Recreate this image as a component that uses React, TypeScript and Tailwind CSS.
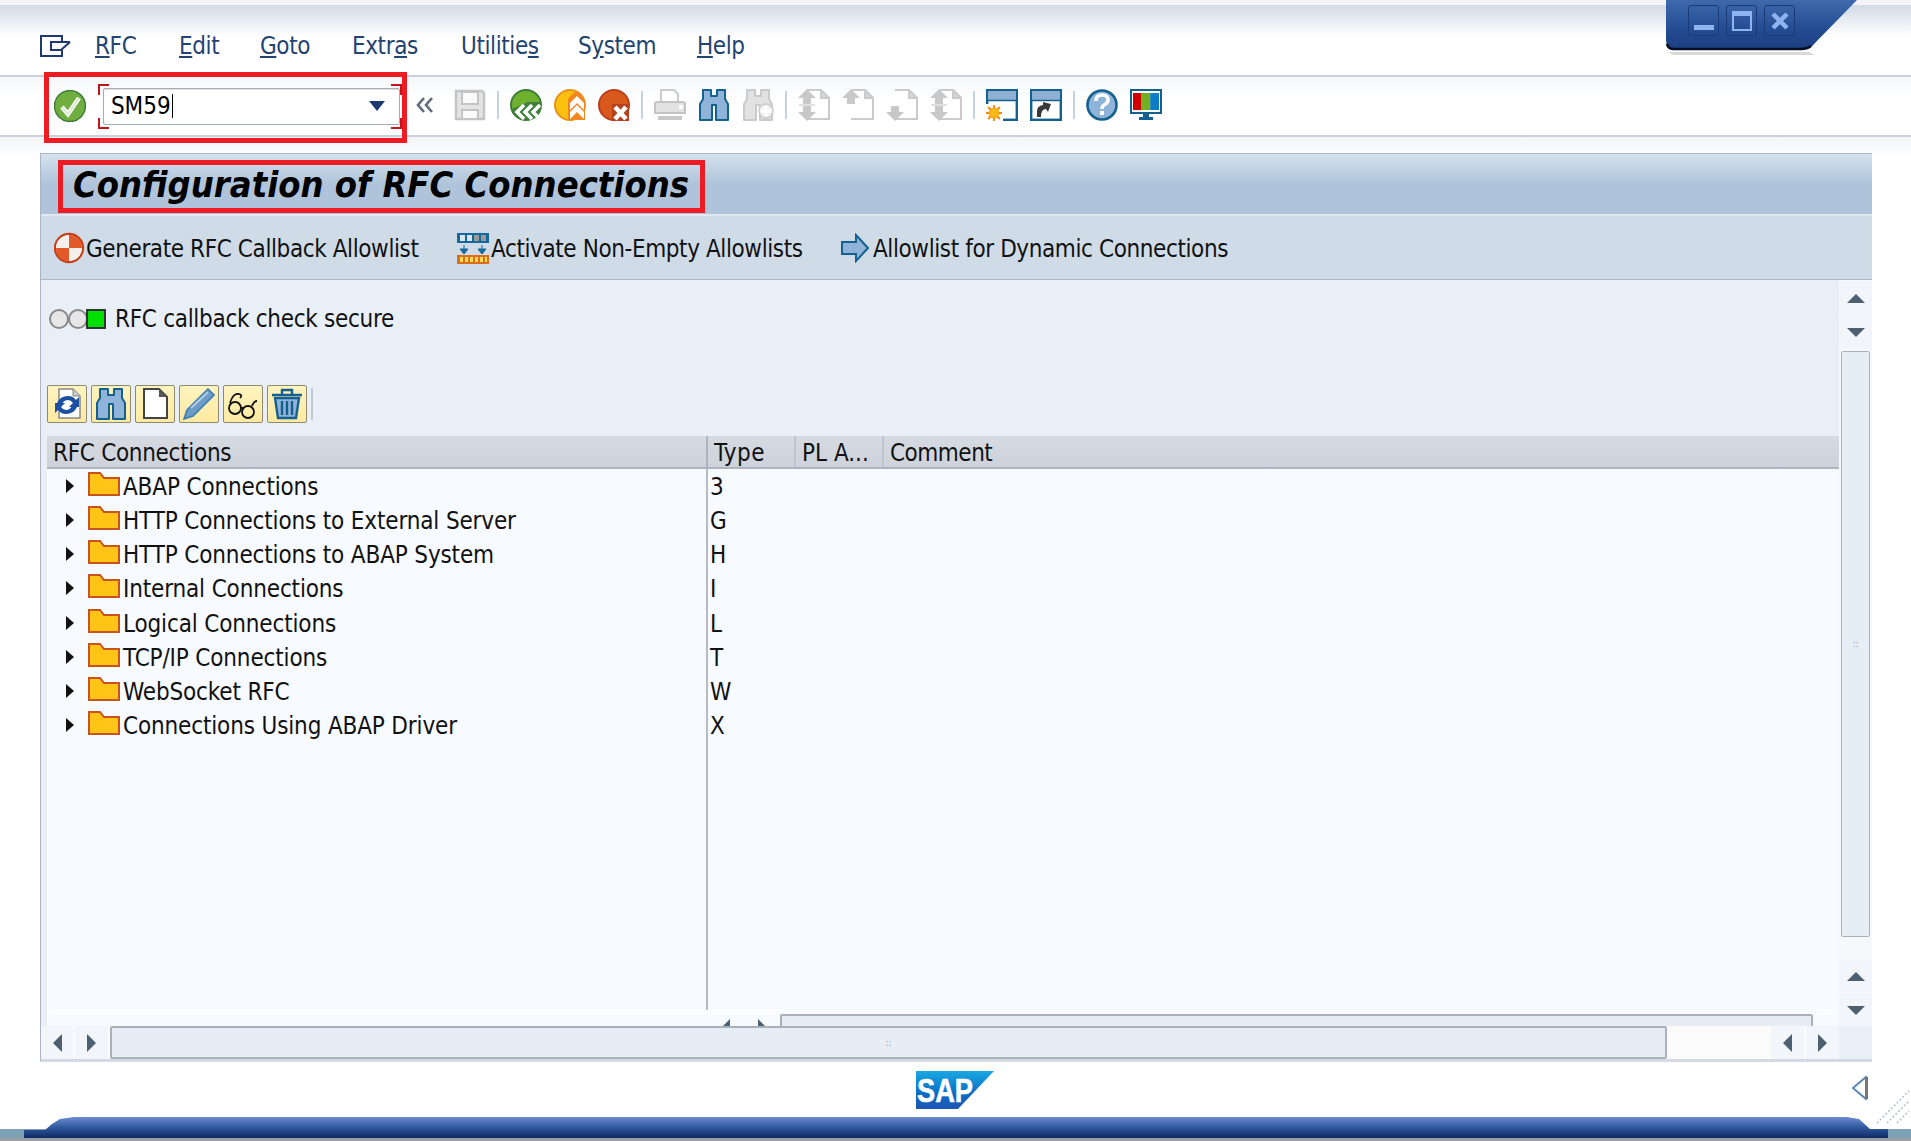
import React from "react";

const font = "font-['DejaVu_Sans_Condensed','DejaVu_Sans',sans-serif]";

function Mnemonic({ a, u, b }: { a?: string; u: string; b?: string }) {
  return (
    <span>
      {a}
      <span className="underline underline-offset-2">{u}</span>
      {b}
    </span>
  );
}

function MenuIcon() {
  return (
    <svg width="31" height="22" viewBox="0 0 31 22" fill="none" stroke="#1f3a70" strokeWidth="2">
      <path d="M22 7V1H1V21H22V15" />
      <path d="M30 7H11V15H21L30 7" />
    </svg>
  );
}

const Ico = ({ children, w = 32, h = 32 }: { children: React.ReactNode; w?: number; h?: number }) => (
  <svg width={w} height={h} viewBox={`0 0 ${w} ${h}`}>
    {children}
  </svg>
);

function CheckIcon() {
  return (
    <Ico>
      <ellipse cx="16" cy="16" rx="15.5" ry="15.5" fill="#6fae3f" stroke="#3f7a3a" strokeWidth="1.5" />
      <path d="M8 17L14 24L25 8" fill="none" stroke="#fff" strokeWidth="4.5" />
      <path d="M8 17L14 24L25 8" fill="none" stroke="#dcebd2" strokeWidth="2" />
    </Ico>
  );
}

function BackIcon() {
  return (
    <Ico>
      <circle cx="16" cy="16" r="15" fill="#6fb02f" stroke="#3f7a3a" strokeWidth="2" />
      <path d="M2 20a15 15 0 0 0 28 2V13H18z" fill="#3f7f3a" />
      <path d="M14 16L7 23L14 30M22 16L15 23L22 30M30 16L23 23L30 30" fill="none" stroke="#fff" strokeWidth="3.6" />
    </Ico>
  );
}

function ExitIcon() {
  return (
    <Ico>
      <circle cx="16" cy="16" r="15" fill="#fcc10f" stroke="#e8941c" strokeWidth="2" />
      <path d="M14 10Q18 4 24 2L31 12V31H14z" fill="#f2871f" />
      <path d="M16 14L23 7L30 14V21L23 14L16 21zM16 23L23 16L30 23V30L23 23L16 30z" fill="#fff" />
    </Ico>
  );
}

function CancelIcon() {
  return (
    <Ico>
      <circle cx="16" cy="16" r="15" fill="#d9581b" stroke="#b9401c" strokeWidth="2" />
      <path d="M14 15H31V32H14z" fill="#b9401c" />
      <path d="M17 18L28 30M28 18L17 30" stroke="#fff" strokeWidth="4.6" />
    </Ico>
  );
}

function SaveIcon() {
  return (
    <Ico>
      <path d="M2 2H28L30 4V30H2z" fill="#e4e4e4" stroke="#c4c4c4" strokeWidth="2.4" />
      <path d="M8 3H24V15H8zM8 21H24V30H8z" fill="#fafafa" stroke="#c4c4c4" strokeWidth="2" />
    </Ico>
  );
}

function PrintIcon() {
  return (
    <Ico>
      <path d="M7 1H20L24 5V14H7z" fill="#fff" stroke="#cacaca" strokeWidth="2" />
      <path d="M1 15Q1 13 3 13H29Q31 13 31 15V24H1z" fill="#e2e2e2" stroke="#c4c4c4" strokeWidth="2" />
      <rect x="25" y="16" width="4" height="4" fill="#fff" />
      <rect x="4" y="27" width="24" height="4" fill="#c8c8c8" />
    </Ico>
  );
}

function Binoculars({ fill = "#8fb3d9", line = "#12618f", extra = false }: { fill?: string; line?: string; extra?: boolean }) {
  return (
    <Ico>
      <path d="M5 1H13V7H19V1H27V10L30 15V31H18V16H14V31H2V15L5 10z" fill={fill} stroke={line} strokeWidth="2" strokeLinejoin="round" />
      {extra && <circle cx="24" cy="22" r="7" fill="#f2f2f2" stroke="#cacaca" strokeWidth="1.5" />}
      {extra && <path d="M24 17V27M19 22H29" stroke="#fff" strokeWidth="3" />}
    </Ico>
  );
}

function PageNav({ up, down, dbl }: { up?: boolean; down?: boolean; dbl?: boolean }) {
  return (
    <Ico>
      <path d="M9 1H23L31 9V30H9" fill="#fff" stroke="#cbcbcb" strokeWidth="2" />
      <path d="M23 1V9H31z" fill="#d6d6d6" stroke="#cbcbcb" strokeWidth="2" />
      {up && <path d="M9 0L0 9H5V15H13V9H18z" fill="#c8c8c8" />}
      {down && <path d="M9 32L0 23H5V17H13V23H18z" fill="#c8c8c8" />}
      {dbl && <path d="M1 16H17" stroke="#e0e0e0" strokeWidth="2" />}
    </Ico>
  );
}

function WindowIcon({ shortcut }: { shortcut?: boolean }) {
  return (
    <Ico>
      <rect x="1.2" y="1.2" width="29.6" height="29.6" fill="#fff" stroke="#14608f" strokeWidth="2.4" />
      <rect x="2" y="2" width="28" height="9" fill="#8fb0d4" />
      <path d="M1 11.5H31" stroke="#14608f" strokeWidth="1.5" />
      {shortcut ? (
        <path d="M7 28V22Q7 17 13 16V13L21 15L18 23L16 20Q11 20 11 28z" fill="#3a3a3a" />
      ) : (
        <>
          <rect x="0" y="15" width="17" height="17" fill="#fff" />
          <circle cx="8" cy="24" r="5.5" fill="#fdb913" />
          <path d="M8 16V32M0 24H16M2 18L14 30M14 18L2 30" stroke="#f08a12" strokeWidth="1.8" />
          <circle cx="8" cy="24" r="4.5" fill="#fdb913" />
        </>
      )}
    </Ico>
  );
}

function HelpIcon() {
  return (
    <Ico>
      <circle cx="16" cy="16" r="14.5" fill="#8fb3d9" stroke="#14608f" strokeWidth="2.6" />
      <path d="M10 12Q10 6 16 6Q22 6 22 11Q22 14 18 16Q16 17 16 20" fill="none" stroke="#fff" strokeWidth="3.6" />
      <rect x="14" y="22" width="4" height="4" fill="#fff" />
    </Ico>
  );
}

function LayoutIcon() {
  return (
    <Ico>
      <rect x="1" y="1" width="30" height="23" fill="#fff" stroke="#14608f" strokeWidth="2" />
      <rect x="3" y="4" width="8.6" height="17" fill="#d00000" />
      <rect x="11.6" y="4" width="8.6" height="17" fill="#72b01d" />
      <rect x="20.2" y="4" width="8.8" height="17" fill="#0a7cc4" />
      <path d="M13 24H19V28H23V31H9V28H13z" fill="#14608f" />
    </Ico>
  );
}

function Sep() {
  return (
    <div className="w-[12px] flex justify-center shrink-0">
      <div className="w-[2px] h-[28px] bg-[#c4d4e4]" />
    </div>
  );
}

function ToolSlot({ children }: { children: React.ReactNode }) {
  return <div className="w-[44px] h-[32px] flex items-center justify-center shrink-0">{children}</div>;
}

function Bracket({ side }: { side: string }) {
  return <div className={`absolute w-[11px] h-[11px] border-[#c0171c] ${side}`} />;
}

function CommandField() {
  return (
    <div className="relative w-[305px] h-[45px] ml-[12px] flex items-center">
      <Bracket side="left-0 top-0 border-l-2 border-t-2" />
      <Bracket side="left-0 bottom-0 border-l-2 border-b-2" />
      <Bracket side="right-0 top-0 border-r-2 border-t-2" />
      <Bracket side="right-0 bottom-0 border-r-2 border-b-2" />
      <div className="ml-[5px] w-[297px] h-[37px] bg-white border border-[#a8adb5] rounded-[2px] shadow-[inset_0_1px_1px_#ddd] flex items-center justify-between pl-[7px] pr-[14px]">
        <span className="text-[24px] text-black leading-none border-r border-black pr-[1px]">SM59</span>
        <svg width="16" height="11" viewBox="0 0 16 11">
          <path d="M0 0H16L8 10z" fill="#1c3a6e" />
        </svg>
      </div>
    </div>
  );
}

function Toolbar() {
  return (
    <div className="relative z-10 h-[62px] shrink-0 border-t-2 border-b-2 border-[#c9d0dc] bg-gradient-to-b from-[#f5f7fa] to-white to-40% flex items-center">
      <div className="ml-[44px] mt-[3px] w-[363px] h-[71px] border-[5px] border-[#ed1c24] flex items-center pl-[5px] pb-[3px] shrink-0">
        <CheckIcon />
        <CommandField />
      </div>
      <div className="flex items-center -mt-[2px]">
        <div className="w-[36px] mr-[5px] flex justify-center text-[#5f6b78]">
          <svg width="18" height="16" viewBox="0 0 18 16" fill="none" stroke="currentColor" strokeWidth="2.6">
            <path d="M8 1L2 8L8 15M16 1L10 8L16 15" />
          </svg>
        </div>
        <ToolSlot><SaveIcon /></ToolSlot>
        <Sep />
        <ToolSlot><BackIcon /></ToolSlot>
        <ToolSlot><ExitIcon /></ToolSlot>
        <ToolSlot><CancelIcon /></ToolSlot>
        <Sep />
        <ToolSlot><PrintIcon /></ToolSlot>
        <ToolSlot><Binoculars /></ToolSlot>
        <ToolSlot><Binoculars fill="#e2e2e2" line="#cacaca" extra /></ToolSlot>
        <Sep />
        <ToolSlot><PageNav up down dbl /></ToolSlot>
        <ToolSlot><PageNav up /></ToolSlot>
        <ToolSlot><PageNav down /></ToolSlot>
        <ToolSlot><PageNav up down dbl /></ToolSlot>
        <Sep />
        <ToolSlot><WindowIcon /></ToolSlot>
        <ToolSlot><WindowIcon shortcut /></ToolSlot>
        <Sep />
        <ToolSlot><HelpIcon /></ToolSlot>
        <ToolSlot><LayoutIcon /></ToolSlot>
      </div>
    </div>
  );
}

function WindowControls() {
  return (
    <div className="absolute top-0 right-[44px] w-[202px] h-[56px] z-20">
      <svg width="202" height="56" viewBox="0 0 202 56" className="absolute inset-0">
        <defs>
          <linearGradient id="wc" x1="0" y1="0" x2="0" y2="1">
            <stop offset="0" stopColor="#3f69ad" />
            <stop offset="0.6" stopColor="#234c92" />
            <stop offset="1" stopColor="#1c3f82" />
          </linearGradient>
        </defs>
        <path d="M3 52H144L150 55H8z" fill="#000" opacity="0.15" />
        <path d="M1 0H192L150 43Q146 49 136 49H9Q1 49 1 40z" fill="url(#wc)" />
        <path d="M2 44Q3 49 9 49H136Q142 49 146 46" fill="none" stroke="#060d22" strokeWidth="2.5" />
      </svg>
      <div className="absolute left-[23px] top-[5px] flex gap-[7px]">
        <div className="w-[31px] h-[31px] rounded-[3px] border border-[#1a3a78] flex items-end justify-center pb-[5px]">
          <div className="w-[20px] h-[5px] bg-[#8fb4f0]" />
        </div>
        <div className="w-[31px] h-[31px] rounded-[3px] border border-[#1a3a78] flex items-center justify-center">
          <div className="w-[20px] h-[20px] border-2 border-[#8fb4f0] border-t-[5px]" />
        </div>
        <div className="w-[31px] h-[31px] rounded-[3px] border border-[#1a3a78] flex items-center justify-center">
          <svg width="18" height="18" viewBox="0 0 18 18">
            <path d="M2 2L16 16M16 2L2 16" stroke="#8fb4f0" strokeWidth="4.5" />
          </svg>
        </div>
      </div>
    </div>
  );
}

function GenerateIcon() {
  return (
    <Ico>
      <circle cx="15" cy="16" r="14" fill="#fff" stroke="#c9401c" strokeWidth="2.4" />
      <path d="M15 16V3A13 13 0 0 1 28 16zM15 16V29A13 13 0 0 1 2 16z" fill="#e2592a" />
      <path d="M15 16V3A13 13 0 0 0 2 16zM15 16V29A13 13 0 0 0 28 16z" fill="#f4f1ec" />
    </Ico>
  );
}

function ActivateIcon() {
  return (
    <Ico>
      <rect x="0" y="1" width="32" height="10" fill="#15699a" />
      <rect x="3" y="3" width="5" height="6" fill="#d7e6f2" />
      <rect x="10" y="3" width="5" height="6" fill="#d7e6f2" />
      <rect x="17" y="3" width="5" height="6" fill="#9a9a9a" />
      <rect x="24" y="3" width="5" height="6" fill="#9a9a9a" />
      <path d="M7 13V18M3 17H11L7 22zM25 13V18M21 17H29L25 22z" fill="#15699a" stroke="#15699a" />
      <rect x="0" y="23" width="32" height="9" fill="#dd6d1f" />
      <path d="M3 25H6V30H3zM8 25H11V30H8zM13 25H16V30H13zM18 25H21V30H18zM23 25H26V30H23zM28 25H30V30H28z" fill="#fddc55" />
    </Ico>
  );
}

function ArrowIcon() {
  return (
    <Ico w={28} h={30}>
      <path d="M1 9H15V2L27 15L15 28V21H1z" fill="#8fb3d9" stroke="#14608f" strokeWidth="2" />
    </Ico>
  );
}

function ActionBtn({ icon, label, className }: { icon: React.ReactNode; label: string; className: string }) {
  return (
    <div className={`flex items-center shrink-0 ${className}`}>
      {icon}
      <span className="text-[24px] text-[#111] whitespace-nowrap tracking-[-0.4px] pt-[2px]">{label}</span>
    </div>
  );
}

function Light({ color }: { color?: string }) {
  if (color) {
    return <div className="w-[20px] h-[20px] border-2 border-[#333] bg-[#00e000] -ml-[1px]" />;
  }
  return <div className="w-[20px] h-[20px] rounded-full bg-[#e6e6e6] border-2 border-[#888] -mr-[1px]" />;
}

function TinyBtn({ children }: { children: React.ReactNode }) {
  return (
    <div className="w-[40px] h-[38px] rounded-[2px] border border-[#8f8a6e] bg-gradient-to-b from-[#fff4c0] to-[#fde9a0] flex items-center justify-center">
      {children}
    </div>
  );
}

function RefreshIcon() {
  return (
    <Ico w={30} h={32}>
      <path d="M7 1H21L28 8V30H7z" fill="#fff" stroke="#888" strokeWidth="1.5" />
      <path d="M21 1V8H28" fill="#ccc" stroke="#888" />
      <path d="M5 15Q8 8 16 8Q21 8 24 12L27 9V19H17L21 15Q19 12 16 12Q12 12 10 16z" fill="#1d4fa0" />
      <path d="M25 19Q22 26 14 26Q9 26 6 22L3 25V15H13L9 19Q11 22 14 22Q18 22 20 18z" fill="#1d4fa0" />
    </Ico>
  );
}

function PageIcon() {
  return (
    <Ico w={26} h={32}>
      <path d="M2 1H17L25 9V30H2z" fill="#fff" stroke="#444" strokeWidth="2" />
      <path d="M17 1V9H25z" fill="#555" />
    </Ico>
  );
}

function PencilIcon() {
  return (
    <Ico>
      <path d="M25 1L31 7L10 28L1 31L4 22z" fill="#6d9cc8" stroke="#3e7fb0" strokeWidth="1.6" />
      <path d="M8 20L25 4" stroke="#b4cde4" strokeWidth="2" />
    </Ico>
  );
}

function GlassesIcon() {
  return (
    <Ico>
      <g fill="none" stroke="#111" strokeWidth="1.8">
        <circle cx="8" cy="20" r="6" />
        <circle cx="21" cy="24" r="6" />
        <path d="M14 20Q16 19 15.5 22M3 15Q6 5 12 6Q16 7 13 10M25 18Q27 13 30 13" />
      </g>
    </Ico>
  );
}

function TrashIcon() {
  return (
    <Ico>
      <path d="M1 7H31M11 7V2H21V7" fill="none" stroke="#14608f" strokeWidth="2.4" />
      <path d="M4 10H28L25 30H7z" fill="#8fb3d9" stroke="#14608f" strokeWidth="2.4" />
      <path d="M11 13V27M16 13V27M21 13V27" stroke="#14608f" strokeWidth="2.4" />
    </Ico>
  );
}

function Folder() {
  return (
    <svg width="32" height="24" viewBox="0 0 32 24" className="shrink-0 -mt-[4px]">
      <path d="M1 23V1H12L16 6H31V23z" fill="#ffc416" stroke="#c8531f" strokeWidth="2" />
    </svg>
  );
}

const rows = [
  ["ABAP Connections", "3"],
  ["HTTP Connections to External Server", "G"],
  ["HTTP Connections to ABAP System", "H"],
  ["Internal Connections", "I"],
  ["Logical Connections", "L"],
  ["TCP/IP Connections", "T"],
  ["WebSocket RFC", "W"],
  ["Connections Using ABAP Driver", "X"],
];

function Tree() {
  return (
    <div className="flex-1 flex flex-col min-h-0 ml-[6px]">
      <div className="h-[33px] shrink-0 flex bg-gradient-to-b from-[#d6dbe2] to-[#cdd2db] border-b-2 border-[#aeb4bd] text-[24px] leading-[35px] text-[#111]">
        <div className="w-[661px] pl-[6px] border-r-2 border-[#aeb4bd] tracking-[-0.3px]">RFC Connections</div>
        <div className="w-[88px] pl-[6px] border-r-2 border-[#bfc5cd] tracking-[0.4px]">Type</div>
        <div className="w-[88px] pl-[6px] border-r-2 border-[#bfc5cd]">PL A...</div>
        <div className="pl-[6px] tracking-[-0.5px]">Comment</div>
      </div>
      <div className="flex-1 flex bg-[#f7fafe] min-h-0">
        <div className="w-[661px] border-r-2 border-[#b7bcc4]">
          {rows.map(([name]) => (
            <div key={name} className="h-[34.14px] flex items-center text-[24px] text-[#111]">
              <svg width="9" height="14" viewBox="0 0 9 14" className="ml-[18px] mr-[14px] shrink-0">
                <path d="M1 0L9 7L1 14z" fill="#111" />
              </svg>
              <Folder />
              <span className="ml-[3px] whitespace-nowrap tracking-[-0.15px] pt-[2px]">{name}</span>
            </div>
          ))}
        </div>
        <div className="flex-1">
          {rows.map(([name, type]) => (
            <div key={name} className="h-[34.14px] pl-[2px] text-[24px] leading-[36px] text-[#111]">
              {type}
            </div>
          ))}
        </div>
      </div>
      <div className="h-[16px] shrink-0 flex bg-[#f7fafe] border-t border-white overflow-hidden">
        <div className="w-[661px]" />
        <div className="w-[36px] h-[16px] flex justify-center items-end">
          <div className="w-0 h-0 border-y-[8px] border-y-transparent border-r-[8px] border-r-[#4c6072] translate-y-[8px]" />
        </div>
        <div className="w-[36px] h-[16px] flex justify-center items-end">
          <div className="w-0 h-0 border-y-[8px] border-y-transparent border-l-[8px] border-l-[#4c6072] translate-y-[8px]" />
        </div>
        <div className="w-[1033px] h-[30px] mt-[3px] border-2 border-[#aab0b8] rounded-[2px] bg-[#e6edf4]" />
      </div>
    </div>
  );
}

function VArrow({ up }: { up?: boolean }) {
  return (
    <div className="h-[32px] w-full shrink-0 bg-[#f2f5f9] flex items-center justify-center">
      <div className={`w-0 h-0 border-x-[9px] border-x-transparent ${up ? "border-b-[9px] border-b-[#4c6072]" : "border-t-[9px] border-t-[#4c6072]"}`} />
    </div>
  );
}

function HArrow({ left, first }: { left?: boolean; first?: boolean }) {
  return (
    <div className={`h-full bg-[#f2f5f9] flex items-center justify-center shrink-0 ${first ? "w-[32px]" : "w-[33px]"}`}>
      <div className={`w-0 h-0 border-y-[9px] border-y-transparent ${left ? "border-r-[9px] border-r-[#4c6072]" : "border-l-[9px] border-l-[#4c6072]"}`} />
    </div>
  );
}

function SapLogo() {
  return (
    <svg width="78" height="38" viewBox="0 0 78 38">
      <defs>
        <linearGradient id="sp" x1="0" y1="0" x2="0" y2="1">
          <stop offset="0" stopColor="#19a9e2" />
          <stop offset="0.6" stopColor="#0a6cc4" />
          <stop offset="1" stopColor="#1f55b4" />
        </linearGradient>
      </defs>
      <path d="M0 0H78L42 38H0z" fill="url(#sp)" />
      <text x="1" y="31" fontFamily="Liberation Sans" fontWeight="700" fontSize="33" fill="#fff" stroke="#fff" strokeWidth="0.6" textLength="56" lengthAdjust="spacingAndGlyphs">
        SAP
      </text>
    </svg>
  );
}

export default function App() {
  return (
    <div className={`relative w-[1911px] h-[1141px] overflow-hidden bg-white flex flex-col ${font}`}>
      {/* menu bar */}
      <div className="h-[75px] shrink-0 bg-gradient-to-b from-[#d2dae7] to-white to-45% border-t-[5px] border-[#f2f4f8] flex items-center pl-[40px] pt-[11px]">
        <MenuIcon />
        <div className="flex ml-[24px] pt-[1px] text-[24px] text-[#234470] tracking-[-0.4px]">
          <div className="w-[84px]"><Mnemonic u="R" b="FC" /></div>
          <div className="w-[81px]"><Mnemonic u="E" b="dit" /></div>
          <div className="w-[92px]"><Mnemonic u="G" b="oto" /></div>
          <div className="w-[109px]"><Mnemonic a="Extr" u="a" b="s" /></div>
          <div className="w-[117px]"><Mnemonic a="Utilitie" u="s" /></div>
          <div className="w-[119px]"><Mnemonic a="S" u="y" b="stem" /></div>
          <div><Mnemonic u="H" b="elp" /></div>
        </div>
      </div>
      <WindowControls />
      <Toolbar />

      {/* main area */}
      <div className="flex-1 min-h-0 flex flex-col bg-gradient-to-b from-[#f2f4f8] to-white to-[2%]">
        <div className="mt-[16px] ml-[40px] w-[1832px] h-[909px] border-t border-l border-[#aab6c4] border-b-[3px] border-b-[#d4dae4] flex flex-col bg-[#e8eff6]">
          <div className="h-[62px] shrink-0 bg-gradient-to-b from-[#d5e2ee] to-[#afc4da] to-50% border-b-2 border-[#e0e8f0] pt-[6px] pl-[17px]">
            <div className="w-[647px] h-[53px] border-[5px] border-[#ed1c24] flex items-center pl-[10px]">
              <span className="text-[36px] font-bold italic text-black whitespace-nowrap -mt-[3px]">Configuration of RFC Connections</span>
            </div>
          </div>
          <div className="h-[64px] shrink-0 bg-[#cfdce8] border-b border-[#a9b8c8] flex items-center">
            <ActionBtn className="ml-[13px] w-[403px]" icon={<GenerateIcon />} label="Generate RFC Callback Allowlist" />
            <ActionBtn className="w-[384px] gap-[2px]" icon={<ActivateIcon />} label="Activate Non-Empty Allowlists" />
            <ActionBtn className="gap-[4px]" icon={<ArrowIcon />} label="Allowlist for Dynamic Connections" />
          </div>

          <div className="flex-1 min-h-0 flex">
            <div className="flex-1 min-w-0 flex flex-col">
              <div className="h-[78px] shrink-0 flex items-center pl-[8px]">
                <Light />
                <Light />
                <Light color="green" />
                <span className="ml-[9px] text-[24px] text-[#111] tracking-[-0.3px]">RFC callback check secure</span>
              </div>
              <div className="mt-[27px] h-[38px] shrink-0 ml-[6px] flex items-center gap-[4px]">
                <TinyBtn><RefreshIcon /></TinyBtn>
                <TinyBtn><Binoculars /></TinyBtn>
                <TinyBtn><PageIcon /></TinyBtn>
                <TinyBtn><PencilIcon /></TinyBtn>
                <TinyBtn><GlassesIcon /></TinyBtn>
                <TinyBtn><TrashIcon /></TinyBtn>
                <div className="w-[2px] h-[32px] bg-[#c2c8d0]" />
              </div>
              <div className="h-[13px] shrink-0" />
              <Tree />
            </div>
            <div className="w-[33px] shrink-0 flex flex-col bg-[#f6f8fb] gap-[2px] pt-[2px]">
              <VArrow up />
              <VArrow />
              <div className="mx-[2px] h-[586px] mt-[1px] shrink-0 border border-[#aab0b8] rounded-[2px] bg-[#e6edf4] flex items-center justify-center text-[#98a2ae] text-[10px] leading-none">
                ::
              </div>
              <div className="flex-1" />
              <VArrow up />
              <VArrow />
            </div>
          </div>

          <div className="h-[33px] shrink-0 flex bg-[#fbfbfc]">
            <HArrow left first />
            <div className="w-[2px]" />
            <HArrow />
            <div className="w-[2px]" />
            <div className="w-[1557px] border-2 border-[#aab0b8] rounded-[2px] bg-[#e6edf4] flex items-center justify-center text-[#98a2ae] text-[10px] leading-none">
              ::
            </div>
            <div className="flex-1" />
            <HArrow left />
            <div className="w-[2px]" />
            <HArrow />
            <div className="w-[33px] bg-[#e8eff6]" />
          </div>
        </div>

        {/* footer */}
        <div className="flex-1 min-h-0 relative flex items-start justify-center pt-[9px] pr-[2px]">
          <SapLogo />
          <div className="absolute right-[43px] top-[14px]">
            <svg width="16" height="24" viewBox="0 0 16 24">
              <path d="M14 1V23L1 12z" fill="#fff" stroke="#5d88b4" strokeWidth="2" />
              <path d="M14.5 1V23" stroke="#777" strokeWidth="3" />
            </svg>
          </div>
          <svg width="38" height="38" viewBox="0 0 38 38" className="absolute right-0 -bottom-[8px] z-10">
            <path d="M4 36L36 4M14 36L36 14M24 36L36 24" stroke="#b8c2cc" strokeWidth="1.6" strokeDasharray="2 2" />
          </svg>
        </div>
        <div className="h-[21px] shrink-0 bg-[linear-gradient(to_bottom,#fff_58%,#7da1b4_58%)]">
          <div className="ml-[24px] w-[1864px] h-[21px] bg-gradient-to-b from-[#6c8bd0] via-[#2f599f] to-[#0e2a63] [clip-path:polygon(50px_0,1823px_0,1835px_2px,1846px_12px,1864px_12px,1864px_21px,0_21px,0_13px,21px_13px,28px_7px,36px_2px)]" />
        </div>
        <div className="h-[3px] shrink-0 bg-[#9aa0a6]" />
      </div>
    </div>
  );
}
